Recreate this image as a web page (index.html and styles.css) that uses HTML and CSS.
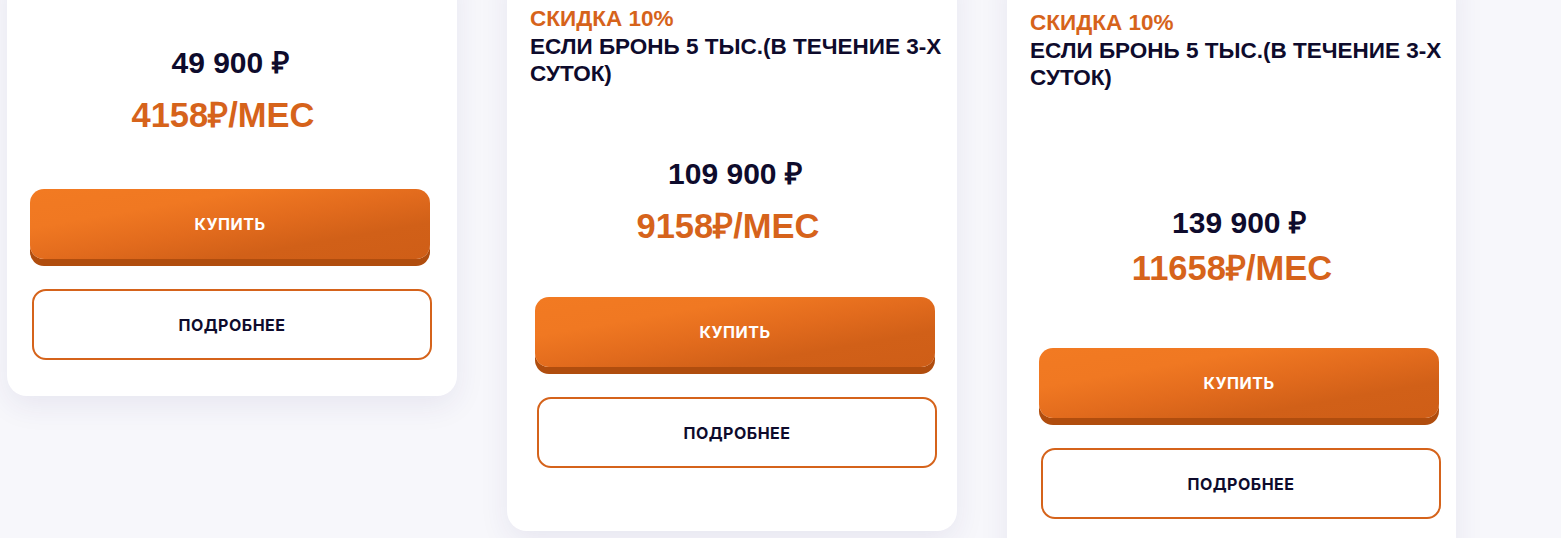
FILE: index.html
```html
<!DOCTYPE html>
<html lang="ru">
<head>
<meta charset="utf-8">
<title>Тарифы</title>
<link rel="stylesheet" href="styles.css">
</head>
<body>
<div class="plans">
  <section class="card card--a">
    <div class="card__body">
      <div class="prices">
        <div class="price">49 900 ₽</div>
        <div class="price-month">4158₽/МЕС</div>
      </div>
      <div class="actions">
        <button class="btn btn--buy">КУПИТЬ</button>
        <button class="btn btn--more">ПОДРОБНЕЕ</button>
      </div>
    </div>
  </section>

  <section class="card card--b">
    <div class="promo">
      <div class="promo__sale">СКИДКА 10%</div>
      <div class="promo__text">ЕСЛИ БРОНЬ 5 ТЫС.(В ТЕЧЕНИЕ 3-Х СУТОК)</div>
    </div>
    <div class="card__body">
      <div class="prices">
        <div class="price">109 900 ₽</div>
        <div class="price-month">9158₽/МЕС</div>
      </div>
      <div class="actions">
        <button class="btn btn--buy">КУПИТЬ</button>
        <button class="btn btn--more">ПОДРОБНЕЕ</button>
      </div>
    </div>
  </section>

  <section class="card card--c">
    <div class="promo">
      <div class="promo__sale">СКИДКА 10%</div>
      <div class="promo__text">ЕСЛИ БРОНЬ 5 ТЫС.(В ТЕЧЕНИЕ 3-Х СУТОК)</div>
    </div>
    <div class="card__body">
      <div class="prices">
        <div class="price">139 900 ₽</div>
        <div class="price-month">11658₽/МЕС</div>
      </div>
      <div class="actions">
        <button class="btn btn--buy">КУПИТЬ</button>
        <button class="btn btn--more">ПОДРОБНЕЕ</button>
      </div>
    </div>
  </section>
</div>
</body>
</html>
```

FILE: styles.css
```css
html, body {
  margin: 0;
  padding: 0;
  background: #f7f7fb;
  overflow: hidden;
}

body {
  font-family: "Liberation Sans", Arial, sans-serif;
  color: #0e0b2c;
}

.plans {
  display: flex;
  align-items: flex-start;
  gap: 50px;
  padding-left: 7px;
  margin-top: -40px;
}

.card {
  width: 450px;
  box-sizing: border-box;
  flex: 0 0 450px;
  background: #ffffff;
  border-radius: 20px;
  padding: 40px 23px 36px;
  box-shadow: 0 10px 30px rgba(45, 35, 110, 0.08);
  display: flex;
  flex-direction: column;
}

.card--b { padding-bottom: 63px; }
.card--c { padding-bottom: 64px; flex-basis: 449px; width: 449px; }

.promo {
  font-weight: 700;
  text-transform: uppercase;
  margin-right: -14px;
}

.card--b .promo { margin-top: 5px; }
.card--c .promo { margin-top: 9px; }

.promo__sale {
  color: #d6631b;
  font-size: 22.5px;
  line-height: 28px;
}

.promo__text {
  color: #0e0b2c;
  font-size: 22.5px;
  line-height: 27px;
}

.card__body {
  width: 400px;
  display: flex;
  flex-direction: column;
}

.card--b .card__body { margin-left: 5px; }
.card--c .card__body { margin-left: 9px; }

.prices {
  display: flex;
  flex-direction: column;
  align-items: center;
  font-weight: 700;
}

.card--a .prices { margin-top: 45px; }
.card--b .prices { margin-top: 69px; }
.card--c .prices { margin-top: 114px; }

.price {
  font-size: 30px;
  line-height: 36px;
  color: #0e0b2c;
}

.price-month {
  margin-top: 13px;
  font-size: 34.5px;
  line-height: 42px;
  color: #d6631b;
  padding-right: 14px;
}

.card--c .price-month { margin-top: 6px; }

.actions {
  margin-top: 53px;
  display: flex;
  flex-direction: column;
  gap: 30px;
}

.card--b .actions { margin-top: 50px; }
.card--c .actions { margin-top: 59px; }

.btn {
  display: flex;
  align-items: center;
  justify-content: center;
  width: 400px;
  height: 70px;
  box-sizing: border-box;
  border-radius: 14px;
  font-family: Inter, "Liberation Sans", sans-serif;
  font-weight: 700;
  font-size: 16px;
  letter-spacing: 0.5px;
  cursor: pointer;
  padding: 0;
}

.btn--buy {
  border: none;
  color: #ffffff;
  background: linear-gradient(to bottom right, #f27a22 0%, #f07822 28%, #e26b1d 52%, #d16018 74%, #cf5e17 100%);
  box-shadow: 0 7px 0 #b04d0e;
}

.btn--more {
  margin-left: 2px;
  height: 71px;
  border: 2px solid #d5631b;
  background: #ffffff;
  color: #0e0b2c;
}
```
